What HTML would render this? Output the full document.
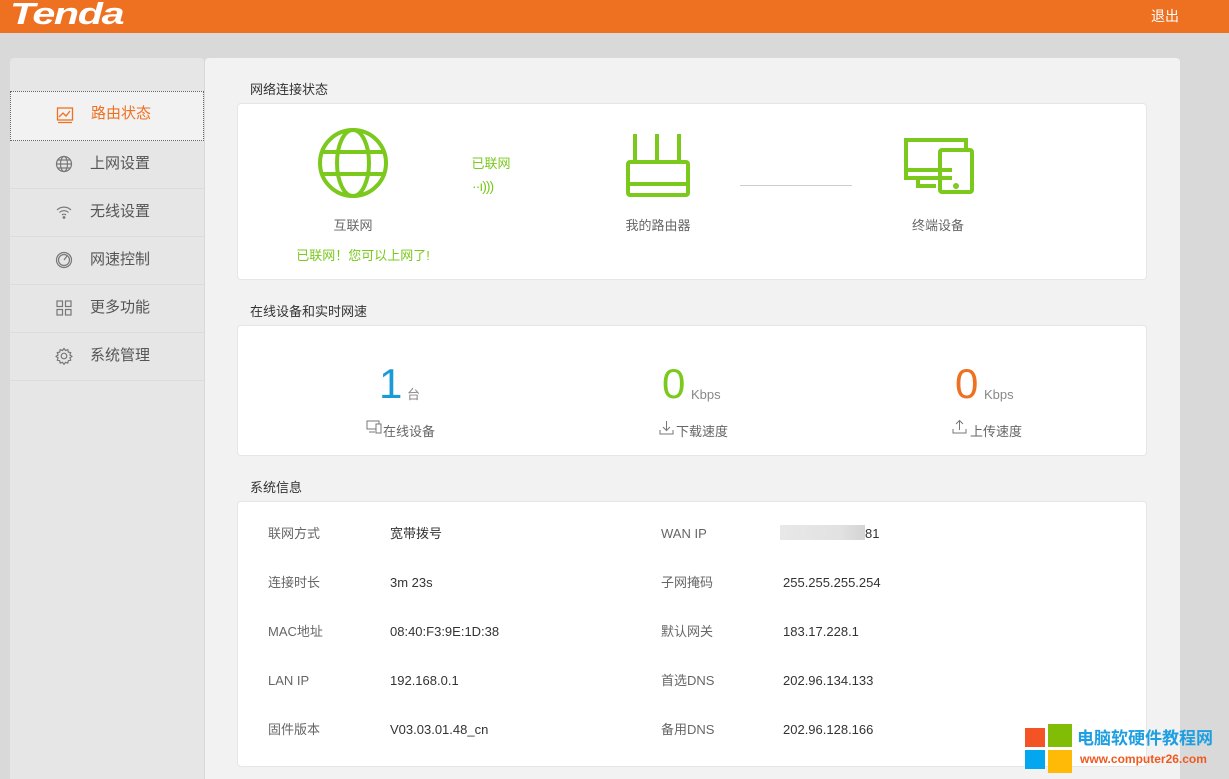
<!DOCTYPE html>
<html><head><meta charset="utf-8"><style>
*{margin:0;padding:0;box-sizing:border-box}
body{width:1229px;height:779px;overflow:hidden;background:#d9d9d9;font-family:"Liberation Sans","Noto Sans CJK SC",sans-serif;position:relative;color:#333;line-height:16px}
.hdr{position:absolute;left:0;top:0;width:1229px;height:33px;background:#ee7021}
.logo{position:absolute;left:10px;top:-3px;color:#fff;font:italic bold 31px/34px "Liberation Sans",sans-serif;transform:scaleX(1.33);transform-origin:left;letter-spacing:-1px}
.out{position:absolute;left:1151px;top:7px;color:#fff;font-size:14px;line-height:18px}
.side{position:absolute;left:10px;top:58px;width:194px;height:721px;background:#e6e6e6;border-radius:4px 4px 0 0}
.item{position:absolute;left:0;width:194px;height:48px;border-bottom:1px solid #dcdcdc;font-size:15px;color:#555;line-height:18px}
.item span{position:absolute;left:80px;top:14px}
.item svg{position:absolute;left:45px;top:14px}
.act{background:#f2f2f2;border:1px dotted #666;color:#ee7021}
.main{position:absolute;left:205px;top:58px;width:975px;height:721px;background:#f2f2f2;border-radius:4px 4px 0 0}
.t{position:absolute;left:250px;font-size:13px;color:#333}
.card{position:absolute;left:237px;width:910px;background:#fff;border:1px solid #e6e6e6;border-radius:4px}
.c{position:absolute;font-size:13px;color:#666;text-align:center}
.g{color:#7ac91c}
.big{position:absolute;font-size:42px;font-weight:300;line-height:48px}
.unit{position:absolute;font-size:13px;color:#888}
.lab{position:absolute;font-size:13px;color:#666}
.r{position:absolute;font-size:13px;color:#333}
</style></head><body>
<div class="hdr"><div class="logo">Tenda</div><div class="out">退出</div></div>
<div class="side">
<div class="item act" style="top:33px;height:50px"><svg width="18" height="18" viewBox="0 0 18 18" fill="none" stroke="#ee7021" stroke-width="1.3"><rect x="1.5" y="2" width="15" height="12"/><path d="M3 11l4-4 3 3 4-5M2 16.5h14"/></svg><span style="top:13px">路由状态</span></div>
<div class="item" style="top:83px"><svg width="18" height="18" viewBox="0 0 18 18" fill="none" stroke="#777" stroke-width="1.2"><circle cx="9" cy="9" r="7.5"/><ellipse cx="9" cy="9" rx="3.5" ry="7.5"/><path d="M1.5 9h15M3 5h12M3 13h12"/></svg><span>上网设置</span></div>
<div class="item" style="top:131px"><svg width="18" height="18" viewBox="0 0 18 18" fill="none" stroke="#777" stroke-width="1.2"><path d="M2 7a10 10 0 0 1 14 0M4.5 9.5a6.5 6.5 0 0 1 9 0M7 12a3 3 0 0 1 4 0"/><circle cx="9" cy="14.5" r=".8" fill="#777"/></svg><span>无线设置</span></div>
<div class="item" style="top:179px"><svg width="18" height="18" viewBox="0 0 18 18" fill="none" stroke="#777" stroke-width="1.2"><circle cx="9" cy="9" r="7.5"/><circle cx="9" cy="9" r="5.5"/><path d="M9 9l3-4"/></svg><span>网速控制</span></div>
<div class="item" style="top:227px"><svg width="18" height="18" viewBox="0 0 18 18" fill="none" stroke="#777" stroke-width="1.2"><rect x="2" y="2" width="5.5" height="5.5"/><rect x="10.5" y="2" width="5.5" height="5.5"/><rect x="2" y="10.5" width="5.5" height="5.5"/><rect x="10.5" y="10.5" width="5.5" height="5.5"/></svg><span>更多功能</span></div>
<div class="item" style="top:275px"><svg width="18" height="18" viewBox="0 0 18 18" fill="none" stroke="#777" stroke-width="1.2"><circle cx="9" cy="9" r="2.8"/><path d="M9 1.5l1.5 2 2.3-.8.5 2.4 2.4.5-.8 2.3 2 1.5-2 1.5.8 2.3-2.4.5-.5 2.4-2.3-.8-1.5 2-1.5-2-2.3.8-.5-2.4-2.4-.5.8-2.3-2-1.5 2-1.5-.8-2.3 2.4-.5.5-2.4 2.3.8z"/></svg><span>系统管理</span></div>
</div>
<div class="main"></div>
<div class="t" style="top:82px">网络连接状态</div>
<div class="card" style="top:103px;height:177px">
<svg style="position:absolute;left:79px;top:23px" width="72" height="72" viewBox="0 0 72 72" fill="none" stroke="#7ac91c" stroke-width="4"><circle cx="36" cy="36" r="33"/><ellipse cx="36" cy="36" rx="16" ry="33"/><path d="M4 25h64M4 47h64"/></svg>
<div class="c" style="left:79px;top:114px;width:72px">互联网</div>
<div class="c g" style="left:40px;top:144px;width:170px">已联网！您可以上网了!</div>
<div class="c g" style="left:228px;top:52px;width:50px">已联网</div>
<div class="c g" style="left:234px;top:74px;font-size:14px;letter-spacing:-1px">··ı)))</div>
<svg style="position:absolute;left:387px;top:28px" width="66" height="65" viewBox="0 0 66 65" fill="none" stroke="#7ac91c" stroke-width="4"><path d="M10 2v28M32 2v28M54 2v28"/><rect x="3" y="30" width="60" height="33" rx="2"/><path d="M3 52h60"/></svg>
<div style="position:absolute;left:502px;top:81px;width:112px;height:1px;background:#ccc"></div>
<div class="c" style="left:380px;top:114px;width:80px">我的路由器</div>
<svg style="position:absolute;left:664px;top:32px" width="72" height="58" viewBox="0 0 72 58" fill="none" stroke="#7ac91c" stroke-width="4"><path d="M50 42H4V4h60v10"/><path d="M4 34h46M16 42v8h18"/><rect x="38" y="14" width="32" height="42" rx="2"/><circle cx="54" cy="50" r="1" fill="#7ac91c"/></svg>
<div class="c" style="left:660px;top:114px;width:80px">终端设备</div>
</div>
<div class="t" style="top:304px">在线设备和实时网速</div>
<div class="card" style="top:325px;height:131px">
<div class="big" style="left:141px;top:34px;color:#1a9bd7">1</div><div class="unit" style="left:169px;top:61px">台</div>
<svg style="position:absolute;left:128px;top:94px" width="16" height="14" viewBox="0 0 16 14" fill="none" stroke="#777"><path d="M10 9H1V1h12v3M3 12h6"/><rect x="10" y="4" width="5" height="9"/></svg>
<div class="lab" style="left:145px;top:98px">在线设备</div>
<div class="big g" style="left:424px;top:34px">0</div><div class="unit" style="left:453px;top:61px">Kbps</div>
<svg style="position:absolute;left:421px;top:94px" width="15" height="15" viewBox="0 0 15 15" fill="none" stroke="#777"><path d="M7.5 1v9M4 7l3.5 3.5L11 7M1 10v4h13v-4"/></svg>
<div class="lab" style="left:438px;top:98px">下载速度</div>
<div class="big" style="left:717px;top:34px;color:#ee7021">0</div><div class="unit" style="left:746px;top:61px">Kbps</div>
<svg style="position:absolute;left:714px;top:93px" width="15" height="15" viewBox="0 0 15 15" fill="none" stroke="#777"><path d="M7.5 11V2M4 5l3.5-3.5L11 5M1 10v4h13v-4"/></svg>
<div class="lab" style="left:732px;top:98px">上传速度</div>
</div>
<div class="t" style="top:480px">系统信息</div>
<div class="card" style="top:501px;height:266px">
<div class="lab" style="left:30px;top:24px">联网方式</div><div class="r" style="left:152px;top:24px">宽带拨号</div>
<div class="lab" style="left:423px;top:24px">WAN IP</div><div style="position:absolute;left:542px;top:23px;width:85px;height:15px;background:linear-gradient(90deg,#e8e8e8,#e2e2e2 70%,#d4d4d4)"></div><div class="r" style="left:627px;top:24px">81</div>
<div class="lab" style="left:30px;top:73px">连接时长</div><div class="r" style="left:152px;top:73px">3m 23s</div>
<div class="lab" style="left:423px;top:73px">子网掩码</div><div class="r" style="left:545px;top:73px">255.255.255.254</div>
<div class="lab" style="left:30px;top:122px">MAC地址</div><div class="r" style="left:152px;top:122px">08:40:F3:9E:1D:38</div>
<div class="lab" style="left:423px;top:122px">默认网关</div><div class="r" style="left:545px;top:122px">183.17.228.1</div>
<div class="lab" style="left:30px;top:171px">LAN IP</div><div class="r" style="left:152px;top:171px">192.168.0.1</div>
<div class="lab" style="left:423px;top:171px">首选DNS</div><div class="r" style="left:545px;top:171px">202.96.134.133</div>
<div class="lab" style="left:30px;top:220px">固件版本</div><div class="r" style="left:152px;top:220px">V03.03.01.48_cn</div>
<div class="lab" style="left:423px;top:220px">备用DNS</div><div class="r" style="left:545px;top:220px">202.96.128.166</div>
</div>
<div style="position:absolute;left:1025px;top:722px">
<div style="position:absolute;left:0;top:6px;width:20px;height:19px;background:#f35325"></div>
<div style="position:absolute;left:23px;top:2px;width:24px;height:23px;background:#81bc06"></div>
<div style="position:absolute;left:0;top:28px;width:20px;height:19px;background:#05a6f0"></div>
<div style="position:absolute;left:23px;top:28px;width:24px;height:23px;background:#ffba08"></div>
<div style="position:absolute;left:52px;top:7px;font-size:17px;line-height:20px;font-weight:bold;color:#1e9fe0;white-space:nowrap">电脑软硬件教程网</div>
<div style="position:absolute;left:55px;top:30px;font-size:12px;line-height:14px;font-weight:bold;color:#ee5a20;white-space:nowrap">www.computer26.com</div>
</div>
</body></html>
